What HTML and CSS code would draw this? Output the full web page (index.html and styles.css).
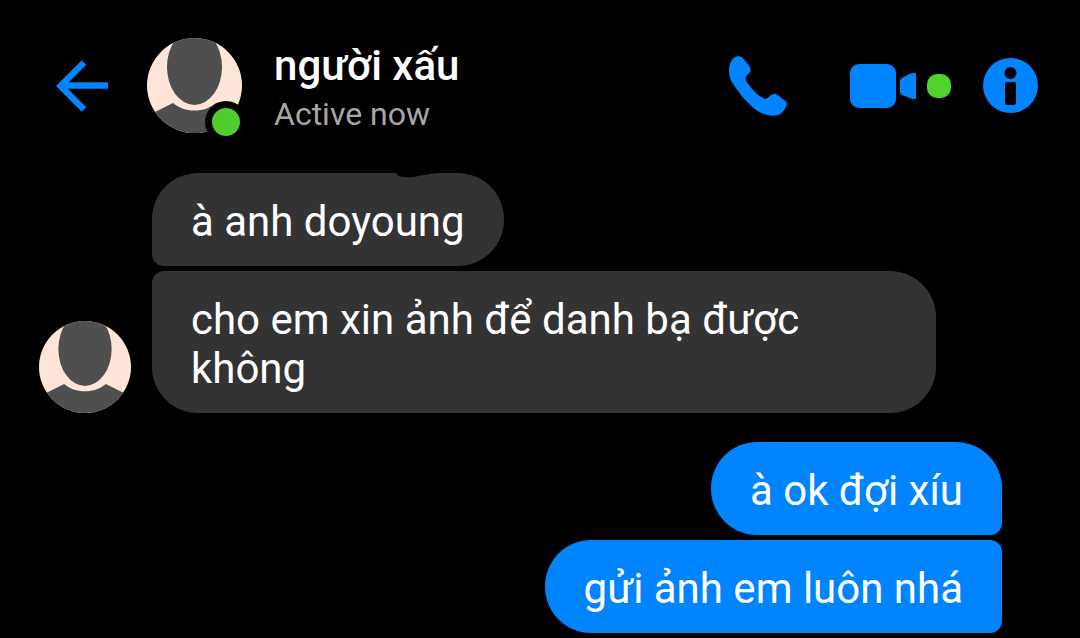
FILE: index.html
```html
<!doctype html>
<html lang="vi">
<head>
 <meta charset="UTF-8">
 <meta name="viewport" content="width=device-width, initial-scale=1.0">
 <title>người xấu</title>
 <link rel="stylesheet" href="styles.css">
</head>
<body>
<header class="header">
 <button class="icon-btn back" type="button" aria-label="Back">
  <svg width="52" height="52" viewBox="0 0 52 52">
   <path d="M28 2.5L4.500 26L28 49.5M5 25.500H52" fill="none" stroke="#0084ff" stroke-width="6.5"/>
  </svg>
 </button>
 <div class="avatar avatar-big">
  <svg viewBox="0 0 95 95">
   <circle cx="47.5" cy="47.5" r="47.5" fill="#ffe4d8"/>
   <g clip-path="url(#round)">
    <ellipse cx="47.5" cy="29" rx="27.5" ry="38" fill="#4f4f4f"/>
    <path d="M0 78L26 65C32 70 39 72.5 47.5 72.5C56 72.5 63 70 69 65L95 78V95H0Z" fill="#4f4f4f"/>
   </g>
   <clipPath id="round"><circle cx="47.5" cy="47.5" r="47.5"/></clipPath>
  </svg>
  <span class="online"></span>
 </div>
 <div class="who">
  <h1 class="name">người xấu</h1>
  <p class="status">Active now</p>
 </div>
 <button class="icon-btn" type="button" aria-label="Call">
  <svg width="58" height="60" viewBox="27 32 174 180">
   <path d="M27 75C27 52 39 33 55 33C62 33 67 36 71 41L88 63C93 69 93 77 88 83C83 89 77 92 77 99C77 108 87 120 97 132C109 146 123 157 134 160C146 160 150 147 163 146C168 146 172 148 176 151L196 167C201 171 202 176 199 182C194 193 184 209 170 210C147 214 124 205 109 195C85 177 59 146 40 117C32 104 27 96 27 75Z" fill="#0084ff"/>
  </svg>
 </button>
 <button class="icon-btn video" type="button" aria-label="Video call">
  <svg width="67" height="44" viewBox="0 0 67 44">
   <rect width="46" height="44" rx="9" fill="#0084ff"/>
   <path d="M50 17Q50 15 52 14L60 9.500Q62 9 64 9H66V35H64Q62 35 60 34L52 31Q50 30 50 28Z" fill="#0084ff"/>
  </svg>
  <span class="video-dot"></span>
 </button>
 <button class="icon-btn info" type="button" aria-label="Info">
  <svg width="55" height="55" viewBox="0 0 55 55">
   <circle cx="27.5" cy="27.5" r="27.5" fill="#0084ff"/>
   <circle cx="27.5" cy="15" r="6" fill="#000"/>
   <rect x="22" y="24" width="11" height="23" rx="2" fill="#000"/>
  </svg>
 </button>
</header>

<main class="chat">
 <div class="group received">
  <div class="avatar">
   <svg viewBox="0 0 95 95">
    <circle cx="47.5" cy="47.5" r="47.5" fill="#ffe4d8"/>
    <g clip-path="url(#round)">
     <ellipse cx="47.5" cy="29" rx="27.5" ry="38" fill="#4f4f4f"/>
     <path d="M0 78L26 65C32 70 39 72.5 47.5 72.5C56 72.5 63 70 69 65L95 78V95H0Z" fill="#4f4f4f"/>
    </g>
   </svg>
  </div>
  <div class="bubbles">
   <p class="bubble first">à anh doyoung
    <svg class="notch" width="44" height="5" viewBox="0 0 44 5"><path d="M0 0C2 3 5 4 9 4C21 5 31 0 44 0Z" fill="#000"/></svg>
   </p>
   <p class="bubble last">cho em xin ảnh để danh bạ được không</p>
  </div>
 </div>
 <div class="group sent">
  <div class="bubbles">
   <p class="bubble first">à ok đợi xíu</p>
   <p class="bubble middle">gửi ảnh em luôn nhá</p>
  </div>
 </div>
</main>
</body>
</html>
```
FILE: styles.css
```css
*{
 margin:0;
 padding:0;
 box-sizing: border-box;
}
body{
 background-color: #000;
 color: #fff;
 font-family: Roboto, "Noto Sans", sans-serif;
 font-size: 42px;
 line-height: 49px;
}
svg{
 display: block;
}
.header{
 display: flex;
 align-items: center;
 padding:38px 42px 40px 56px;
}
.icon-btn{
 display: flex;
 align-items: center;
 border:0;
 background: none;
 cursor: pointer;
}
.back{
 margin-right: 39px;
}
.avatar{
 flex:none;
 width:92px;
}
.avatar-big{
 position: relative;
 width:95px;
}
.online{
 position: absolute;
 right: -5px;
 bottom:-10px;
 width:42px;
 height:42px;
 border:7px solid #000;
 border-radius:50%;
 background-color: #51cc30;
}
.who{
 flex:1;
 margin-left: 32px;
 padding-top: 3px;
}
.name{
 font-size: 42px;
 font-weight: 500;
}
.status{
 margin-top: 5px;
 font-size: 32px;
 line-height: 38px;
 color: #a6a6a6;
}
.video{
 gap:10px;
 margin-left: 63px;
}
.video-dot{
 width:24px;
 height:24px;
 border-radius:10px;
 background-color: #51d32d;
}
.info{
 margin-left: 32px;
}
.chat{
 padding:0 78px 5px 39px;
}
.group{
 display: flex;
 align-items: flex-end;
}
.received{
 gap:21px;
 padding-right: 66px;
}
.sent{
 justify-content: flex-end;
 margin-top: 29px;
}
.bubbles{
 display: flex;
 flex-direction: column;
 align-items: flex-start;
 gap:5px;
}
.received .bubbles{
 flex:1;
}
.sent .bubbles{
 align-items: flex-end;
}
.bubble{
 position: relative;
 padding:24px 39px 20px;
 border-radius:46px;
 background-color: #333;
}
.received .first{
 border-bottom-left-radius:12px;
}
.received .last{
 border-top-left-radius:12px;
}
.sent .bubble{
 background-color: #0084ff;
}
.sent .first{
 border-bottom-right-radius:12px;
}
.sent .middle{
 border-top-right-radius:12px;
 border-bottom-right-radius:12px;
}
.notch{
 position: absolute;
 top:0;
 right: 64px;
}
```
